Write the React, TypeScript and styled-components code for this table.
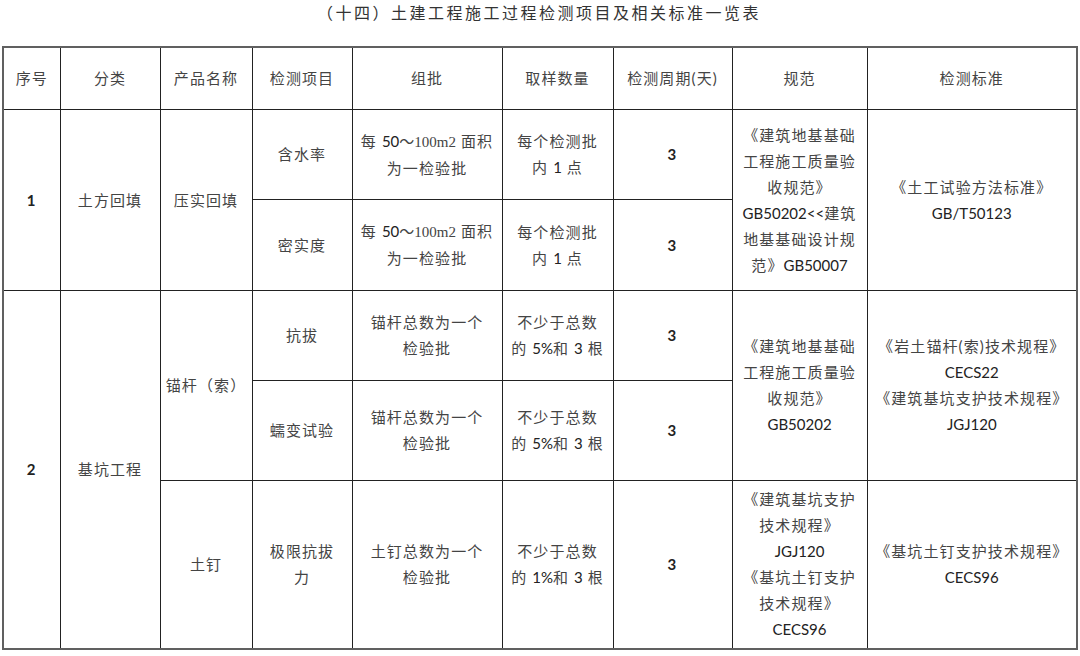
import React, { Fragment, ReactNode } from 'react';
import styled, { createGlobalStyle } from 'styled-components';

const GlobalStyle = createGlobalStyle`
  html, body {
    margin: 0;
    padding: 0;
    background: #ffffff;
  }
  body {
    font-family: Lato, "Noto Sans CJK SC", sans-serif;
    color: #3a3a3a;
  }
`;

const Page = styled.div`
  width: 1080px;
  padding: 0 4px 0 2px;
  box-sizing: border-box;
`;

const Title = styled.h1`
  margin: 0;
  padding-top: 3px;
  height: 43px;
  font-size: 16px;
  line-height: 20px;
  font-weight: 400;
  letter-spacing: 2.5px;
  text-align: center;
  color: #333333;
`;

const Table = styled.table`
  width: 1074px;
  table-layout: fixed;
  border-collapse: collapse;
  border: 2px solid #606060;
  font-size: 15px;
  line-height: 26px;
  letter-spacing: 1.1px;
`;

const Row = styled.tr<{ $h: number }>`
  height: ${(p) => p.$h}px;
`;

const HeadCell = styled.th`
  border: 1px solid #222222;
  font-weight: 400;
  text-align: center;
  vertical-align: middle;
  padding: 0 4px;
  white-space: nowrap;
  color: #444444;
`;

const Cell = styled.td<{ $num?: boolean }>`
  border: 1px solid #222222;
  text-align: center;
  vertical-align: middle;
  padding: 0 4px;
  white-space: nowrap;
  color: ${(p) => (p.$num ? '#222222' : '#444444')};
  font-weight: ${(p) => (p.$num ? 700 : 400)};
`;

const Roman = styled.span`
  font-family: "Liberation Serif", "Noto Sans CJK SC", serif;
  letter-spacing: 0;
`;

const Code = styled.span`
  letter-spacing: 0;
  color: #222222;
`;

const Lines = ({ items }: { items: ReactNode[] }) => (
  <>
    {items.map((item, i) => (
      <Fragment key={i}>
        {i > 0 && <br />}
        {item}
      </Fragment>
    ))}
  </>
);

const widths = [57, 100, 92, 100, 150, 111, 119, 135, 210];
const headers = ['序号', '分类', '产品名称', '检测项目', '组批', '取样数量', '检测周期(天)', '规范', '检测标准'];

const perArea = [
  <>
    每 <Code>50</Code>
    <Roman>～100m2</Roman> 面积
  </>,
  '为一检验批',
];

const perBatch = [
  '每个检测批',
  <>
    内 <Code>1</Code> 点
  </>,
];

const notLess = (pct: string) => [
  '不少于总数',
  <>
    的 <Code>{pct}%</Code>和 <Code>3</Code> 根
  </>,
];

export default function App() {
  return (
    <Page>
      <GlobalStyle />
      <Title>（十四）土建工程施工过程检测项目及相关标准一览表</Title>
      <Table>
        <colgroup>
          {widths.map((w, i) => (
            <col key={i} style={{ width: w }} />
          ))}
        </colgroup>
        <thead>
          <Row $h={62}>
            {headers.map((h) => (
              <HeadCell key={h}>{h}</HeadCell>
            ))}
          </Row>
        </thead>
        <tbody>
          <Row $h={90}>
            <Cell rowSpan={2} $num>
              1
            </Cell>
            <Cell rowSpan={2}>土方回填</Cell>
            <Cell rowSpan={2}>压实回填</Cell>
            <Cell>含水率</Cell>
            <Cell>
              <Lines items={perArea} />
            </Cell>
            <Cell>
              <Lines items={perBatch} />
            </Cell>
            <Cell $num>3</Cell>
            <Cell rowSpan={2}>
              <Lines
                items={[
                  '《建筑地基基础',
                  '工程施工质量验',
                  '收规范》',
                  <>
                    <Code>GB50202&lt;&lt;</Code>建筑
                  </>,
                  '地基基础设计规',
                  <>
                    范》<Code>GB50007</Code>
                  </>,
                ]}
              />
            </Cell>
            <Cell rowSpan={2}>
              <Lines items={['《土工试验方法标准》', <Code>GB/T50123</Code>]} />
            </Cell>
          </Row>
          <Row $h={91}>
            <Cell>密实度</Cell>
            <Cell>
              <Lines items={perArea} />
            </Cell>
            <Cell>
              <Lines items={perBatch} />
            </Cell>
            <Cell $num>3</Cell>
          </Row>
          <Row $h={90}>
            <Cell rowSpan={3} $num>
              2
            </Cell>
            <Cell rowSpan={3}>基坑工程</Cell>
            <Cell rowSpan={2}>锚杆（索）</Cell>
            <Cell>抗拔</Cell>
            <Cell>
              <Lines items={['锚杆总数为一个', '检验批']} />
            </Cell>
            <Cell>
              <Lines items={notLess('5')} />
            </Cell>
            <Cell $num>3</Cell>
            <Cell rowSpan={2}>
              <Lines items={['《建筑地基基础', '工程施工质量验', '收规范》', <Code>GB50202</Code>]} />
            </Cell>
            <Cell rowSpan={2}>
              <Lines
                items={[
                  '《岩土锚杆(索)技术规程》',
                  <Code>CECS22</Code>,
                  '《建筑基坑支护技术规程》',
                  <Code>JGJ120</Code>,
                ]}
              />
            </Cell>
          </Row>
          <Row $h={100}>
            <Cell>蠕变试验</Cell>
            <Cell>
              <Lines items={['锚杆总数为一个', '检验批']} />
            </Cell>
            <Cell>
              <Lines items={notLess('5')} />
            </Cell>
            <Cell $num>3</Cell>
          </Row>
          <Row $h={169}>
            <Cell>土钉</Cell>
            <Cell>
              <Lines items={['极限抗拔', '力']} />
            </Cell>
            <Cell>
              <Lines items={['土钉总数为一个', '检验批']} />
            </Cell>
            <Cell>
              <Lines items={notLess('1')} />
            </Cell>
            <Cell $num>3</Cell>
            <Cell>
              <Lines
                items={[
                  '《建筑基坑支护',
                  '技术规程》',
                  <Code>JGJ120</Code>,
                  '《基坑土钉支护',
                  '技术规程》',
                  <Code>CECS96</Code>,
                ]}
              />
            </Cell>
            <Cell>
              <Lines items={['《基坑土钉支护技术规程》', <Code>CECS96</Code>]} />
            </Cell>
          </Row>
        </tbody>
      </Table>
    </Page>
  );
}
